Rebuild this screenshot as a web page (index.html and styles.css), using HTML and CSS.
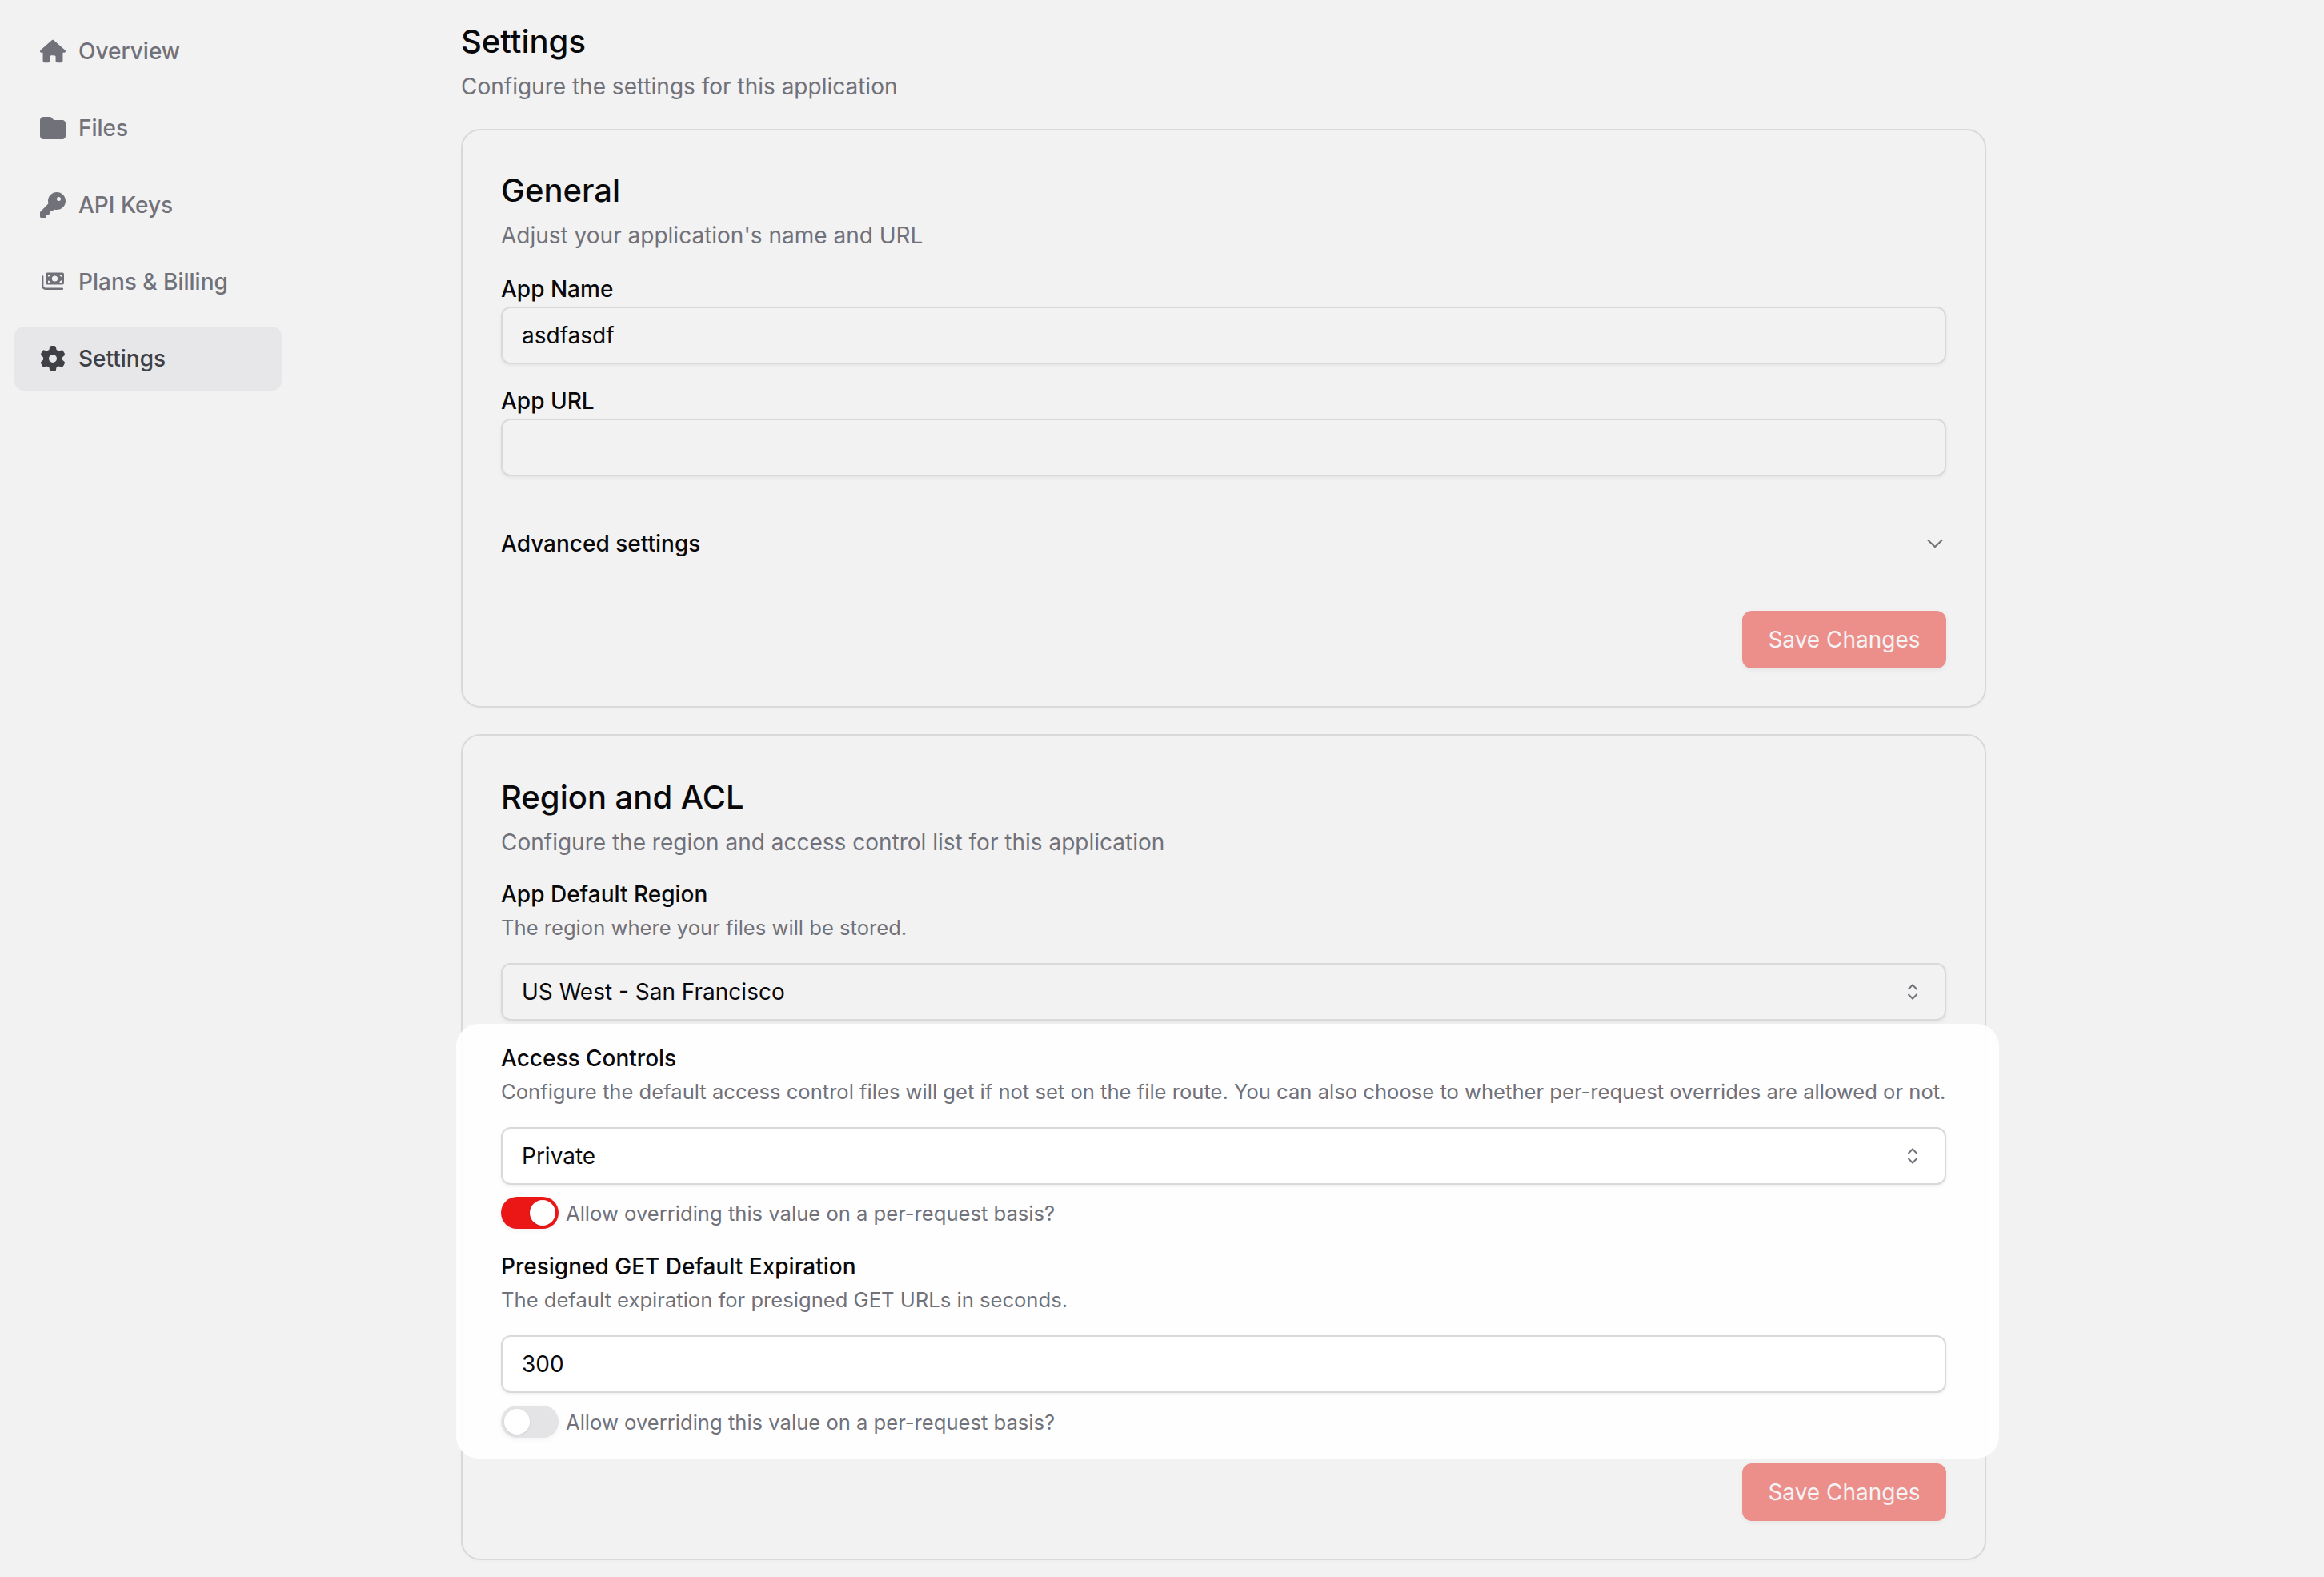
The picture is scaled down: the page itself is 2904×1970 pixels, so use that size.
FILE: index.html
```html
<!DOCTYPE html>
<html lang="en">
<head>
<meta charset="utf-8">
<title>Settings</title>
<link rel="stylesheet" href="styles.css">
</head>
<body>
<div class="layout">
  <nav class="sidebar">
    <a class="nav-item"><svg class="nav-icon" viewBox="0 0 576 512"><path d="M575.8 255.5c0 18-15 32.1-32 32.1h-32l.7 160.2c0 2.7-.2 5.4-.5 8.1V472c0 22.1-17.9 40-40 40H456c-1.1 0-2.2 0-3.3-.1c-1.4 .1-2.8 .1-4.2 .1H416 392c-22.1 0-40-17.9-40-40V448 384c0-17.7-14.3-32-32-32H256c-17.7 0-32 14.3-32 32v64 24c0 22.1-17.9 40-40 40H160 128.1c-1.5 0-3-.1-4.5-.2c-1.2 .1-2.4 .2-3.6 .2H104c-22.1 0-40-17.9-40-40V360c0-.9 0-1.9 .1-2.8V287.6H32c-18 0-32-14-32-32.1c0-9 3-17 10-24L266.4 8c7-7 15-8 22-8s15 2 21 7L564.8 231.5c8 7 12 15 11 24z"/></svg>Overview</a>
    <a class="nav-item"><svg class="nav-icon" viewBox="0 0 512 512"><path d="M64 480H448c35.3 0 64-28.7 64-64V160c0-35.3-28.7-64-64-64H288c-10.1 0-19.6-4.7-25.6-12.8L243.2 57.6C231.1 41.5 212.1 32 192 32H64C28.7 32 0 60.7 0 96V416c0 35.3 28.7 64 64 64z"/></svg>Files</a>
    <a class="nav-item"><svg class="nav-icon" viewBox="0 0 512 512"><path d="M336 352c97.2 0 176-78.8 176-176S433.2 0 336 0S160 78.8 160 176c0 18.7 2.9 36.8 8.3 53.7L7 391c-4.5 4.5-7 10.6-7 17v80c0 13.3 10.7 24 24 24h80c13.3 0 24-10.7 24-24V448h40c13.3 0 24-10.7 24-24V384h40c6.4 0 12.5-2.5 17-7l33.3-33.3c16.9 5.4 35 8.3 53.7 8.3zM376 96a40 40 0 1 1 0 80 40 40 0 1 1 0-80z"/></svg>API Keys</a>
    <a class="nav-item"><svg class="nav-icon" viewBox="0 0 32 32"><path fill-rule="evenodd" d="M7 6.5a2 2 0 0 1 2-2h19a2 2 0 0 1 2 2v11a2 2 0 0 1-2 2H9a2 2 0 0 1-2-2zM10 7v2.6A2.6 2.6 0 0 0 12.6 7zM24.4 7a2.6 2.6 0 0 0 3.1 2.6V7zM10 17h2.6a2.6 2.6 0 0 0-2.6-2.6zM27.5 14.4a2.6 2.6 0 0 0-3.1 2.6h3.1zM18.5 8.4a3.6 3.6 0 1 0 0 7.2 3.6 3.6 0 0 0 0-7.2z"/><path d="M2 9.5a1.2 1.2 0 0 1 2.4 0V21a2.4 2.4 0 0 0 2.4 2.4h21a1.3 1.3 0 0 1 0 2.6h-21A5 5 0 0 1 2 21z"/></svg>Plans &amp; Billing</a>
    <a class="nav-item nav-item-active"><svg class="nav-icon" viewBox="0 0 512 512"><path d="M495.9 166.6c3.2 8.7 .5 18.4-6.4 24.6l-43.3 39.4c1.1 8.3 1.7 16.8 1.7 25.4s-.6 17.1-1.7 25.4l43.3 39.4c6.9 6.2 9.6 15.9 6.4 24.6c-4.4 11.9-9.7 23.3-15.8 34.3l-4.7 8.1c-6.6 11-14 21.4-22.1 31.2c-5.9 7.2-15.7 9.6-24.5 6.8l-55.7-17.7c-13.4 10.3-28.2 18.9-44 25.4l-12.5 57.1c-2 9.1-9 16.3-18.2 17.8c-13.8 2.3-28 3.5-42.5 3.5s-28.7-1.2-42.5-3.5c-9.2-1.5-16.2-8.7-18.2-17.8l-12.5-57.1c-15.8-6.5-30.6-15.1-44-25.4L83.1 425.9c-8.8 2.8-18.6 .3-24.5-6.8c-8.1-9.8-15.5-20.2-22.1-31.2l-4.7-8.1c-6.1-11-11.4-22.4-15.8-34.3c-3.2-8.7-.5-18.4 6.4-24.6l43.3-39.4C64.6 273.1 64 264.6 64 256s.6-17.1 1.7-25.4L22.4 191.2c-6.9-6.2-9.6-15.9-6.4-24.6c4.4-11.9 9.7-23.3 15.8-34.3l4.7-8.1c6.6-11 14-21.4 22.1-31.2c5.9-7.2 15.7-9.6 24.5-6.8l55.7 17.7c13.4-10.3 28.2-18.9 44-25.4l12.5-57.1c2-9.1 9-16.3 18.2-17.8C227.3 1.2 241.5 0 256 0s28.7 1.2 42.5 3.5c9.2 1.5 16.2 8.7 18.2 17.8l12.5 57.1c15.8 6.5 30.6 15.1 44 25.4l55.7-17.7c8.8-2.8 18.6-.3 24.5 6.8c8.1 9.8 15.5 20.2 22.1 31.2l4.7 8.1c6.1 11 11.4 22.4 15.8 34.3zM256 336a80 80 0 1 0 0-160 80 80 0 1 0 0 160z"/></svg>Settings</a>
  </nav>
  <main class="main">
    <h1 class="page-title">Settings</h1>
    <p class="page-sub">Configure the settings for this application</p>

    <section class="card card-general">
      <h2 class="card-title">General</h2>
      <p class="card-sub">Adjust your application's name and URL</p>
      <div class="label label-first">App Name</div>
      <div class="field"><span class="field-text">asdfasdf</span></div>
      <div class="label label-url">App URL</div>
      <div class="field"></div>
      <div class="advanced">
        <span class="advanced-text">Advanced settings</span>
        <svg class="chevron" viewBox="0 0 20 12" fill="none"><path d="M1 1.5l9 8.5 9-8.5" stroke="#71717a" stroke-width="2"/></svg>
      </div>
      <div class="actions"><button class="save">Save Changes</button></div>
    </section>

    <section class="card card-region">
      <h2 class="card-title card-title-region">Region and ACL</h2>
      <p class="card-sub">Configure the region and access control list for this application</p>
      <div class="label label-region">App Default Region</div>
      <p class="hint">The region where your files will be stored.</p>
      <div class="field field-select"><span class="field-text">US West - San Francisco</span><svg class="updown" viewBox="0 0 14 22" fill="none"><path d="M1.5 8L7 2.5 12.5 8M1.5 14L7 19.5 12.5 14" stroke="#71717a" stroke-width="2"/></svg></div>

      <div class="highlight">
        <div class="label label-access">Access Controls</div>
        <p class="hint">Configure the default access control files will get if not set on the file route. You can also choose to whether per-request overrides are allowed or not.</p>
        <div class="field field-select field-white"><span class="field-text">Private</span><svg class="updown" viewBox="0 0 14 22" fill="none"><path d="M1.5 8L7 2.5 12.5 8M1.5 14L7 19.5 12.5 14" stroke="#71717a" stroke-width="2"/></svg></div>
        <div class="toggle-row">
          <span class="toggle toggle-on"><span class="knob"></span></span>
          <span class="toggle-text">Allow overriding this value on a per-request basis?</span>
        </div>
        <div class="label label-presigned">Presigned GET Default Expiration</div>
        <p class="hint">The default expiration for presigned GET URLs in seconds.</p>
        <div class="field field-white"><span class="field-text">300</span></div>
        <div class="toggle-row toggle-row-last">
          <span class="toggle"><span class="knob"></span></span>
          <span class="toggle-text">Allow overriding this value on a per-request basis?</span>
        </div>
      </div>

      <div class="actions actions-region"><button class="save">Save Changes</button></div>
    </section>
  </main>
</div>
</body>
</html>
```
FILE: styles.css
```css
* { box-sizing: border-box; }
html, body { margin: 0; padding: 0; }
body {
  background: #f2f2f2;
  color: #09090b;
  font-family: Inter, "Liberation Sans", sans-serif;
  height: 1970px;
  overflow: hidden;
}
p, h1, h2 { margin: 0; }
.layout { display: flex; align-items: flex-start; }
.sidebar {
  width: 334px;
  margin-left: 18px;
  margin-right: 224px;
  padding-top: 24px;
  display: flex;
  flex-direction: column;
  gap: 16px;
  flex: none;
}
.nav-item {
  height: 80px;
  display: flex;
  align-items: center;
  gap: 16px;
  padding-left: 32px;
  border-radius: 12px;
  font-size: 28px;
  font-weight: 500;
  line-height: 40px;
  color: #71717a;
  fill: #71717a;
}
.nav-item-active { background: #e7e7e9; color: #3f3f46; fill: #3f3f46; }
.nav-icon { width: 32px; height: 32px; flex: none; }
.main { width: 1906px; flex: none; }
.page-title { font-size: 40px; line-height: 48px; font-weight: 500; margin-top: 28px; }
.page-sub { font-size: 28px; line-height: 40px; color: #71717a; margin-top: 12px; }
.card {
  border: 2px solid #d9d9d9;
  border-radius: 24px;
  padding: 0 48px;
  box-shadow: 0 2px 4px rgba(0,0,0,.02);
}
.card-general { height: 723px; margin-top: 33px; }
.card-region { height: 1032px; margin-top: 33px; }
.card-title { font-size: 40px; line-height: 56px; font-weight: 500; margin-top: 47px; }
.card-title-region { margin-top: 49px; }
.card-sub { font-size: 28px; line-height: 40px; color: #71717a; margin-top: 8px; }
.label { font-size: 28px; line-height: 40px; font-weight: 500; }
.label-first { margin-top: 27px; }
.label-url { margin-top: 26px; }
.label-region { margin-top: 25px; }
.label-access { padding-top: 23px; }
.label-presigned { margin-top: 27px; }
.hint { font-size: 25.6px; line-height: 36px; color: #71717a; margin-top: 4px; white-space: nowrap; }
.field {
  height: 72px;
  border: 2px solid #d9d9d9;
  border-radius: 12px;
  padding: 0 24px;
  display: flex;
  align-items: center;
  justify-content: space-between;
  font-size: 28px;
  box-shadow: 0 2px 4px rgba(0,0,0,.06);
}
.label + .field { margin-top: 2px; }
.hint + .field { margin-top: 26px; }
.field-white { background: #fff; }
.advanced {
  height: 56px;
  margin-top: 56px;
  display: flex;
  align-items: center;
  justify-content: space-between;
  padding-right: 4px;
}
.advanced-text { font-size: 28px; font-weight: 500; }
.chevron { width: 20px; height: 12px; }
.updown { width: 14px; height: 22px; margin-right: 9px; }
.actions { display: flex; justify-content: flex-end; margin-top: 56px; }
.actions-region { margin-top: 6px; }
.save {
  width: 255px;
  height: 72px;
  border: 0;
  border-radius: 12px;
  background: #ec8e8a;
  color: #f4f4f5;
  font-family: inherit;
  font-size: 28px;
  box-shadow: 0 2px 6px rgba(0,0,0,.05);
}
.highlight {
  margin: 4px -66px 0 -56px;
  padding: 0 66px 0 56px;
  height: 543px;
  border-radius: 28px;
  background: rgba(255,255,255,.9);
}
.toggle-row { display: flex; align-items: center; gap: 9px; margin-top: 15px; height: 40px; }
.toggle-row-last { margin-top: 16px; }
.toggle {
  width: 72px;
  height: 40px;
  border-radius: 20px;
  background: #e4e4e7;
  padding: 4px;
  flex: none;
  box-shadow: 0 2px 6px rgba(0,0,0,.05);
}
.toggle-on { background: #eb1616; display: flex; justify-content: flex-end; }
.knob { display: block; width: 32px; height: 32px; border-radius: 50%; background: #fff; box-shadow: 0 1px 3px rgba(0,0,0,.1); }
.toggle-text { font-size: 25.6px; color: #71717a; }
```
